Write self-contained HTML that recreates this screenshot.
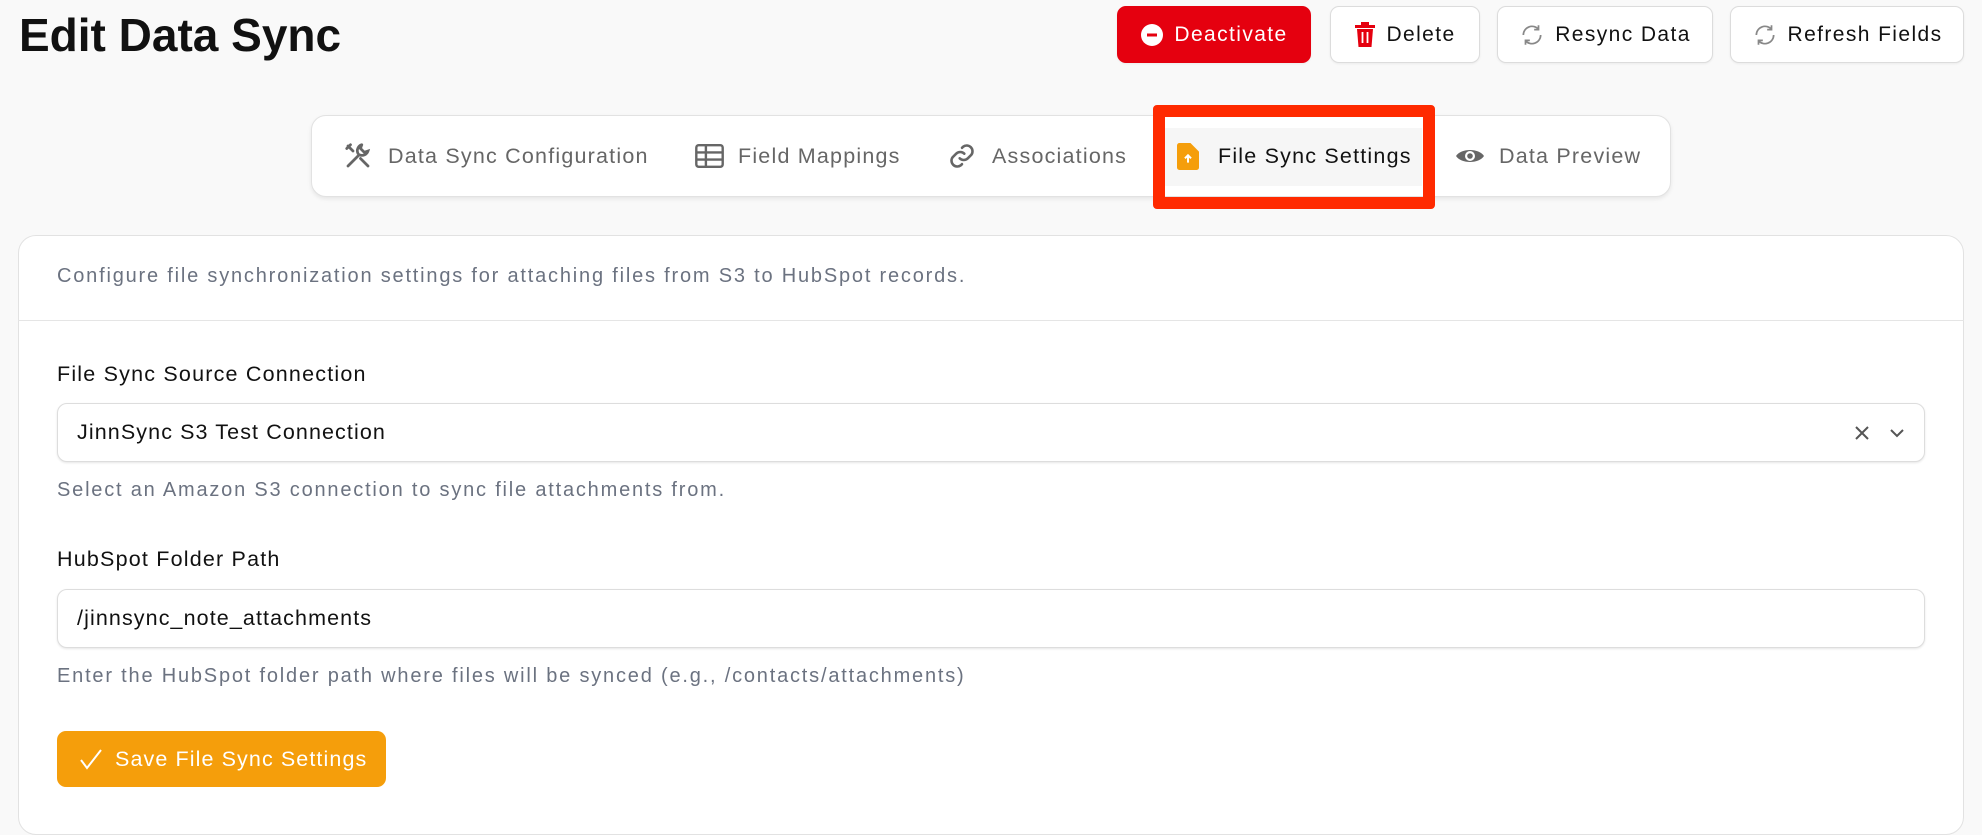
<!DOCTYPE html>
<html><head><meta charset="utf-8"><style>
*{box-sizing:border-box;margin:0;padding:0}
body{width:1982px;height:814px;overflow:hidden;background:#f9f9f9;font-family:"Liberation Sans",sans-serif;position:relative;color:#111}
.abs{position:absolute}
h1{position:absolute;left:19px;top:8px;font-size:46px;font-weight:bold;letter-spacing:0;color:#111}
.btn{position:absolute;top:6px;height:57px;border-radius:9px;border:1px solid #dcdcdc;background:#fff;display:flex;align-items:center;justify-content:center;gap:10px;font-size:21px;letter-spacing:1.4px;color:#111;box-shadow:0 1px 2px rgba(0,0,0,.06)}
.tabs{position:absolute;left:311px;top:115px;width:1360px;height:82px;background:#fff;border:1px solid #e2e2e2;border-radius:15px;box-shadow:0 2px 4px rgba(0,0,0,.08)}
.tab{position:absolute;top:0;height:82px;display:flex;align-items:center;font-size:21.5px;letter-spacing:1.2px;color:#666;white-space:nowrap}
.card{position:absolute;left:18px;top:235px;width:1946px;height:600px;background:#fff;border:1px solid #e2e2e2;border-radius:18px}
.t{position:absolute;font-size:20px;letter-spacing:1.8px;color:#6b7280;white-space:nowrap}
.lbl{position:absolute;font-size:21.5px;letter-spacing:1.2px;color:#111;white-space:nowrap}
.inp{position:absolute;left:57px;width:1868px;height:59px;border:1px solid #ddd;border-radius:10px;background:#fff;box-shadow:0 1px 2px rgba(0,0,0,.1);font-size:21.5px;letter-spacing:1.1px;color:#111;padding-left:19px;display:flex;align-items:center}
</style></head><body>
<h1>Edit Data Sync</h1>
<div class="btn" style="left:1117px;width:194px;background:#e5000f;border-color:#e5000f;color:#fff">
<svg width="24" height="24" viewBox="0 0 24 24"><circle cx="12" cy="12" r="11" fill="#fff"/><rect x="7" y="10.5" width="10" height="3" fill="#e5000f"/></svg>Deactivate</div>
<div class="btn" style="left:1330px;width:150px">
<svg width="22" height="26" viewBox="0 0 22 26"><rect x="1" y="3" width="20" height="3" fill="#e5000f"/><rect x="7" y="0" width="8" height="4" fill="#e5000f"/><path d="M3 7h16l-1.5 18h-13z" fill="#e5000f"/><path d="M8.5 10v11M13.5 10v11" stroke="#fff" stroke-width="1.8"/></svg>Delete</div>
<div class="btn" style="left:1497px;width:216px">
<svg width="26" height="26" viewBox="0 0 24 24" fill="none" stroke="#888" stroke-width="1.6"><path d="M20 12a8 8 0 0 1-14 5.3M4 12a8 8 0 0 1 14-5.3"/><path d="M18 3v4h-4M6 21v-4h4"/></svg>Resync Data</div>
<div class="btn" style="left:1730px;width:234px">
<svg width="26" height="26" viewBox="0 0 24 24" fill="none" stroke="#888" stroke-width="1.6"><path d="M20 12a8 8 0 0 1-14 5.3M4 12a8 8 0 0 1 14-5.3"/><path d="M18 3v4h-4M6 21v-4h4"/></svg>Refresh Fields</div>

<div class="tabs"></div>
<div class="abs" style="left:1165px;top:128px;width:257px;height:58px;background:#f6f6f6"></div>
<div class="abs" style="left:1153px;top:105px;width:282px;height:104px;border:12px solid #ff2a00;border-radius:4px"></div>
<div class="tab" style="left:343px;top:115px">
<svg width="30" height="30" viewBox="0 0 24 24" fill="none" stroke="#666" stroke-width="2.2" stroke-linecap="round"><path d="M4 20l9-9M15 3a5 5 0 0 0-3 7M15 3l-1 3 3 3 3-1a5 5 0 0 1-7 3"/><path d="M4 4l4 4M3 6l3-3M14 14l6 6"/></svg><span style="margin-left:15px">Data Sync Configuration</span></div>
<div class="tab" style="left:695px;top:115px">
<svg width="29" height="24" viewBox="0 0 24 20"><rect x="1" y="1" width="22" height="18" rx="2" fill="none" stroke="#666" stroke-width="2"/><path d="M1 7h22M1 13h22M9 1v18" stroke="#666" stroke-width="2"/></svg><span style="margin-left:14px">Field Mappings</span></div>
<div class="tab" style="left:948px;top:115px">
<svg width="28" height="28" viewBox="0 0 24 24" fill="none" stroke="#666" stroke-width="2.2" stroke-linecap="round"><path d="M10 14a5 5 0 0 0 7 0l3-3a5 5 0 0 0-7-7l-1 1"/><path d="M14 10a5 5 0 0 0-7 0l-3 3a5 5 0 0 0 7 7l1-1"/></svg><span style="margin-left:16px">Associations</span></div>
<div class="tab" style="left:1177px;top:115px;color:#111">
<svg width="22" height="27" viewBox="0 0 18 22"><path d="M0 2a2 2 0 0 1 2-2h9l7 7v13a2 2 0 0 1-2 2H2a2 2 0 0 1-2-2z" fill="#f59e0b"/><path d="M9 16v-6M6.5 12.5L9 10l2.5 2.5" stroke="#fff" stroke-width="1.6" fill="none"/></svg><span style="margin-left:19px">File Sync Settings</span></div>
<div class="tab" style="left:1455px;top:115px">
<svg width="30" height="20" viewBox="0 0 30 20"><path d="M1 10C6 2 24 2 29 10C24 18 6 18 1 10z" fill="#666"/><circle cx="15" cy="10" r="5" fill="#fff"/><circle cx="15" cy="10" r="2.8" fill="#666"/></svg><span style="margin-left:14px">Data Preview</span></div>

<div class="card"></div>
<div class="abs" style="left:18px;top:320px;width:1946px;height:1px;background:#e5e5e5"></div>
<div class="t" style="left:57px;top:265px">Configure file synchronization settings for attaching files from S3 to HubSpot records.</div>
<div class="lbl" style="left:57px;top:362px">File Sync Source Connection</div>
<div class="inp" style="top:403px">JinnSync S3 Test Connection
<svg class="abs" style="left:1795px;top:20px" width="18" height="18" viewBox="0 0 18 18" stroke="#555" stroke-width="2"><path d="M3 3l12 12M15 3L3 15"/></svg>
<svg class="abs" style="left:1830px;top:23px" width="18" height="12" viewBox="0 0 18 12" fill="none" stroke="#555" stroke-width="2"><path d="M3 3l6 6 6-6"/></svg></div>
<div class="t" style="left:57px;top:479px">Select an Amazon S3 connection to sync file attachments from.</div>
<div class="lbl" style="left:57px;top:547px">HubSpot Folder Path</div>
<div class="inp" style="top:589px">/jinnsync_note_attachments</div>
<div class="t" style="left:57px;top:665px">Enter the HubSpot folder path where files will be synced (e.g., /contacts/attachments)</div>
<div class="abs" style="left:57px;top:731px;width:329px;height:56px;background:#f59e0b;border-radius:9px;color:#fff;font-size:21.5px;letter-spacing:1.1px;display:flex;align-items:center;white-space:nowrap">
<svg style="margin-left:22px" width="24" height="22" viewBox="0 0 24 22" fill="none" stroke="#fff" stroke-width="2"><path d="M2 12l6 8L22 2"/></svg><span style="margin-left:12px">Save File Sync Settings</span></div>
</body></html>
